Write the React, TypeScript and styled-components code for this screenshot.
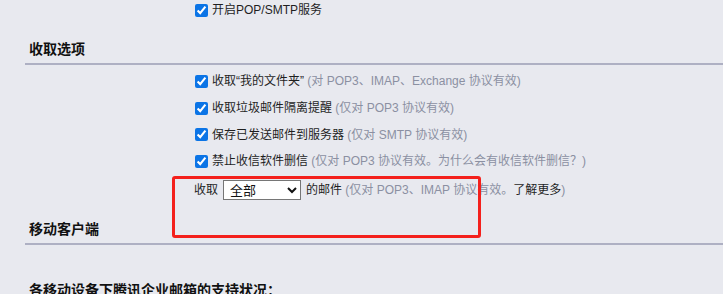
import React from 'react';
import styled, { createGlobalStyle } from 'styled-components';

const GlobalStyle = createGlobalStyle`
  html, body {
    margin: 0;
    padding: 0;
    background: #e8e9ef;
  }
  body {
    font-family: 'Liberation Sans', 'Noto Sans CJK SC', sans-serif;
    font-size: 12px;
    color: #1f1f1f;
    overflow: hidden;
  }
`;

interface OptionType {
  label: string;
  note: string;
}

const options: OptionType[] = [
  { label: '收取“我的文件夹”', note: '(对 POP3、IMAP、Exchange 协议有效)' },
  { label: '收取垃圾邮件隔离提醒', note: '(仅对 POP3 协议有效)' },
  { label: '保存已发送邮件到服务器', note: '(仅对 SMTP 协议有效)' },
  { label: '禁止收信软件删信', note: '(仅对 POP3 协议有效。为什么会有收信软件删信？)' },
];

const App = () => {
  return (
    <>
      <GlobalStyle />
      <Page>
        <TopRow>
          <Check type="checkbox" defaultChecked />
          <Label>开启POP/SMTP服务</Label>
        </TopRow>

        <Section>
          <Heading>收取选项</Heading>
          <Options>
            {options.map((o) => (
              <CheckRow key={o.label}>
                <Check type="checkbox" defaultChecked />
                <Label>
                  {o.label} <Note>{o.note}</Note>
                </Label>
              </CheckRow>
            ))}
            <SelectRow>
              <Label>收取</Label>
              <Select defaultValue="all">
                <option value="all">全部</option>
                <option value="30">最近30天</option>
              </Select>
              <Label>
                的邮件 <Note>(仅对 POP3、IMAP 协议有效。</Note>
                <Link>了解更多</Link>
                <Note>)</Note>
              </Label>
            </SelectRow>
          </Options>
          <Highlight />
        </Section>

        <Section>
          <Heading>移动客户端</Heading>
          <SubTitle>各移动设备下腾讯企业邮箱的支持状况：</SubTitle>
        </Section>
      </Page>
    </>
  );
};

const Page = styled.div`
  position: relative;
  width: 723px;
  height: 294px;
  overflow: hidden;
`;

const TopRow = styled.div`
  display: flex;
  align-items: center;
  height: 20px;
  padding-left: 194px;
  margin-bottom: 10px;
`;

const Section = styled.div`
  margin-left: 25px;
`;

const Heading = styled.div`
  font-size: 14px;
  font-weight: bold;
  line-height: 20px;
  padding: 9px 0 4px 4px;
  border-bottom: 2px solid #aeb0c3;
  color: #111;
`;

const Options = styled.div`
  padding: 3px 0 7px 169px;
`;

const CheckRow = styled.div`
  display: flex;
  align-items: center;
  height: 26.7px;
`;

const Check = styled.input`
  width: 13px;
  height: 13px;
  margin: 0 4px 0 1px;
  accent-color: #0b74e6;
`;

const Label = styled.span`
  white-space: nowrap;
  line-height: 16px;
`;

const Note = styled.span`
  color: #8b90a2;
`;

const Link = styled.span`
  color: #1f1f1f;
`;

const SelectRow = styled.div`
  display: flex;
  align-items: center;
  gap: 4px;
  height: 26px;
  margin-top: 2.6px;
`;

const Select = styled.select`
  width: 78px;
  height: 20px;
  font-family: 'Liberation Sans', 'Noto Sans CJK SC', sans-serif;
  font-size: 13px;
  color: #111;
  background: #fff;
  border: 1px solid #767676;
  border-radius: 0;
  padding: 0 2px;
  margin: 0 1px;
`;

const Highlight = styled.div`
  position: absolute;
  left: 172px;
  top: 176px;
  width: 303px;
  height: 56px;
  border: 3px solid #f4201c;
  border-radius: 3px;
  pointer-events: none;
`;

const SubTitle = styled.div`
  font-size: 14px;
  font-weight: bold;
  line-height: 20px;
  padding: 35px 0 0 4px;
  color: #111;
`;

export default App;
